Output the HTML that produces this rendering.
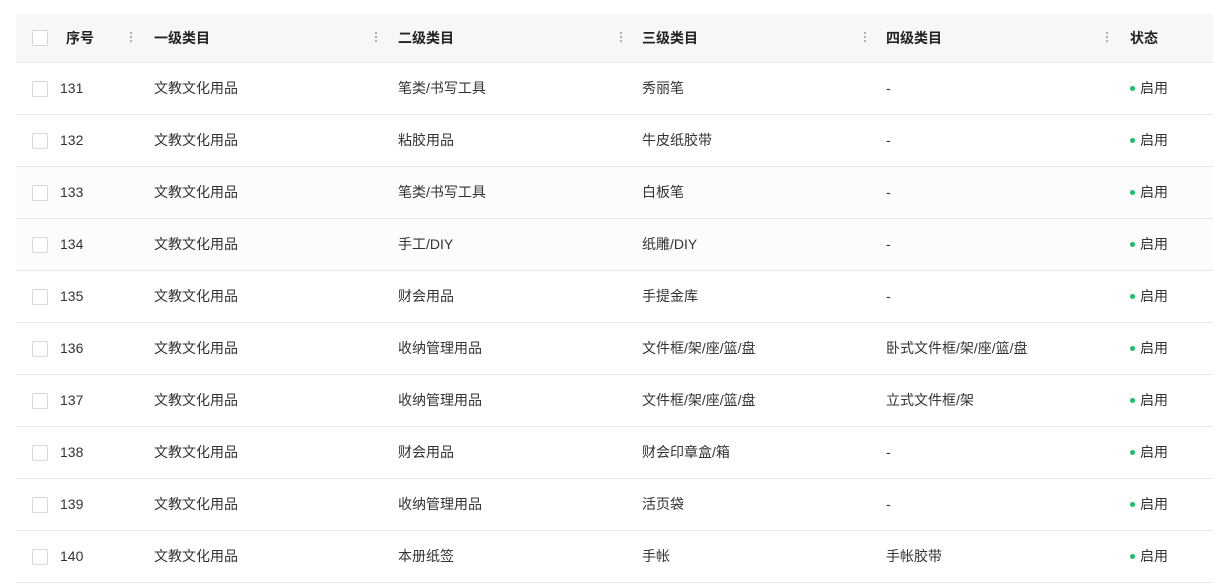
<!DOCTYPE html>
<html><head><meta charset="utf-8"><style>
*{margin:0;padding:0;box-sizing:border-box}
body{width:1213px;height:587px;background:#fff;font-family:"Liberation Sans","Noto Sans CJK SC",sans-serif;font-size:14px;color:#333;position:relative;overflow:hidden}
.tbl{position:absolute;left:16px;top:14px;width:1197px}
.hd{height:49px;background:#f7f7f7;border-bottom:1px solid #e6e6e6;position:relative;font-weight:bold;color:#222}
.row{height:52px;border-bottom:1px solid #e8e8e8;position:relative}
.c{position:absolute;top:0;line-height:48px;white-space:nowrap}
.row .c{line-height:51px}
.cb{position:absolute;left:16px;top:16px;width:16px;height:16px;border:1px solid #d9d9d9;background:#fff;border-radius:2px}
.row .cb{top:18px}
.dots{position:absolute;top:17px;width:2px;height:13px;background:radial-gradient(circle,#aaa 1px,transparent 1.2px) 0 0/2px 4px repeat-y}
.st{position:absolute;left:1114px;line-height:51px}
.st:before{content:"";display:inline-block;width:5px;height:5px;border-radius:50%;background:#19be6b;margin-right:5px;vertical-align:2px}
</style></head><body>
<div class="tbl">
<div class="hd">
<div class="cb"></div>
<div class="c" style="left:50px">序号</div><div class="dots" style="left:114px"></div>
<div class="c" style="left:138px">一级类目</div><div class="dots" style="left:359px"></div>
<div class="c" style="left:382px">二级类目</div><div class="dots" style="left:604px"></div>
<div class="c" style="left:626px">三级类目</div><div class="dots" style="left:848px"></div>
<div class="c" style="left:870px">四级类目</div><div class="dots" style="left:1090px"></div>
<div class="c" style="left:1114px">状态</div>
</div>
<div class="row"><div class="cb"></div><div class="c" style="left:44px">131</div><div class="c" style="left:138px">文教文化用品</div><div class="c" style="left:382px">笔类/书写工具</div><div class="c" style="left:626px">秀丽笔</div><div class="c" style="left:870px">-</div><div class="st">启用</div></div>
<div class="row"><div class="cb"></div><div class="c" style="left:44px">132</div><div class="c" style="left:138px">文教文化用品</div><div class="c" style="left:382px">粘胶用品</div><div class="c" style="left:626px">牛皮纸胶带</div><div class="c" style="left:870px">-</div><div class="st">启用</div></div>
<div class="row" style="background:#fcfcfc"><div class="cb"></div><div class="c" style="left:44px">133</div><div class="c" style="left:138px">文教文化用品</div><div class="c" style="left:382px">笔类/书写工具</div><div class="c" style="left:626px">白板笔</div><div class="c" style="left:870px">-</div><div class="st">启用</div></div>
<div class="row" style="background:#fcfcfc"><div class="cb"></div><div class="c" style="left:44px">134</div><div class="c" style="left:138px">文教文化用品</div><div class="c" style="left:382px">手工/DIY</div><div class="c" style="left:626px">纸雕/DIY</div><div class="c" style="left:870px">-</div><div class="st">启用</div></div>
<div class="row"><div class="cb"></div><div class="c" style="left:44px">135</div><div class="c" style="left:138px">文教文化用品</div><div class="c" style="left:382px">财会用品</div><div class="c" style="left:626px">手提金库</div><div class="c" style="left:870px">-</div><div class="st">启用</div></div>
<div class="row"><div class="cb"></div><div class="c" style="left:44px">136</div><div class="c" style="left:138px">文教文化用品</div><div class="c" style="left:382px">收纳管理用品</div><div class="c" style="left:626px">文件框/架/座/篮/盘</div><div class="c" style="left:870px">卧式文件框/架/座/篮/盘</div><div class="st">启用</div></div>
<div class="row"><div class="cb"></div><div class="c" style="left:44px">137</div><div class="c" style="left:138px">文教文化用品</div><div class="c" style="left:382px">收纳管理用品</div><div class="c" style="left:626px">文件框/架/座/篮/盘</div><div class="c" style="left:870px">立式文件框/架</div><div class="st">启用</div></div>
<div class="row"><div class="cb"></div><div class="c" style="left:44px">138</div><div class="c" style="left:138px">文教文化用品</div><div class="c" style="left:382px">财会用品</div><div class="c" style="left:626px">财会印章盒/箱</div><div class="c" style="left:870px">-</div><div class="st">启用</div></div>
<div class="row"><div class="cb"></div><div class="c" style="left:44px">139</div><div class="c" style="left:138px">文教文化用品</div><div class="c" style="left:382px">收纳管理用品</div><div class="c" style="left:626px">活页袋</div><div class="c" style="left:870px">-</div><div class="st">启用</div></div>
<div class="row"><div class="cb"></div><div class="c" style="left:44px">140</div><div class="c" style="left:138px">文教文化用品</div><div class="c" style="left:382px">本册纸签</div><div class="c" style="left:626px">手帐</div><div class="c" style="left:870px">手帐胶带</div><div class="st">启用</div></div>
</div>
</body></html>
